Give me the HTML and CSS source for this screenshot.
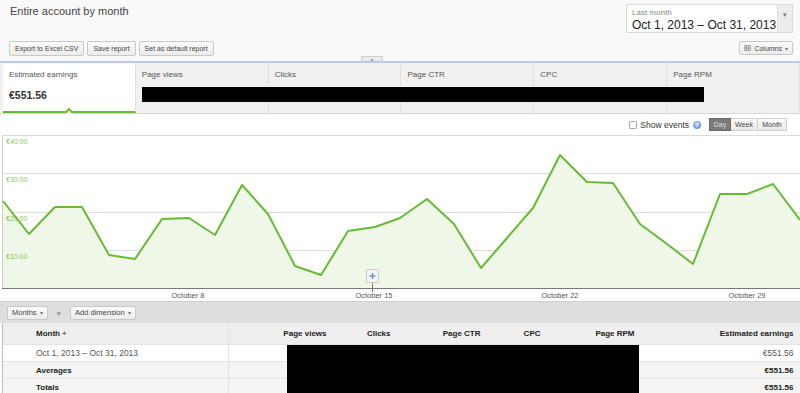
FILE: index.html
```html
<!DOCTYPE html>
<html lang="en">
<head>
  <meta charset="UTF-8">
  <meta name="viewport" content="width=device-width, initial-scale=1.0">
  <title>Entire account by month</title>
  <link rel="stylesheet" href="styles.css">
</head>
<body>
  <div class="page">
    <!-- report header -->
    <div class="report-head">
      <div class="head-left">
        <h1>Entire account by month</h1>
        <div class="btns">
          <button class="btn">Export to Excel CSV</button>
          <button class="btn">Save report</button>
          <button class="btn">Set as default report</button>
        </div>
      </div>
      <div class="head-right">
        <div class="date-picker">
          <div class="date-text">
            <div class="date-label">Last month</div>
            <div class="date-range">Oct 1, 2013 – Oct 31, 2013</div>
          </div>
          <div class="date-arrow">▾</div>
        </div>
        <button class="btn columns-btn">
          <svg width="7" height="6" viewBox="0 0 7 6"><path d="M0.5 0.5h6v5h-6zM0.5 2.2h6M0.5 3.8h6M2.5 0.5v5M4.5 0.5v5" fill="none" stroke="#999" stroke-width="0.8"/></svg>
          Columns <span class="caret">▾</span>
        </button>
      </div>
    </div>

    <div class="collapse-bar"><span class="collapse-tab">▲</span></div>

    <!-- metric tabs -->
    <div class="metrics">
      <div class="metric active">
        <div class="metric-label">Estimated earnings</div>
        <div class="metric-value">€551.56</div>
      </div>
      <div class="metric"><div class="metric-label">Page views</div></div>
      <div class="metric"><div class="metric-label">Clicks</div></div>
      <div class="metric"><div class="metric-label">Page CTR</div></div>
      <div class="metric"><div class="metric-label">CPC</div></div>
      <div class="metric"><div class="metric-label">Page RPM</div></div>
      <div class="redact metric-redact"></div>
    </div>

    <div class="chart-controls">
      <span class="checkbox"></span>
      <span class="events-label">Show events</span>
      <span class="help">?</span>
      <div class="seg">
        <span class="seg-btn on">Day</span>
        <span class="seg-btn">Week</span>
        <span class="seg-btn">Month</span>
      </div>
    </div>

    <!-- chart -->
    <div class="chart">
      <svg width="800" height="166" viewBox="0 0 800 166">
        <g stroke="#dcdcdc" stroke-width="1">
          <line x1="2" y1="0.5" x2="800" y2="0.5"/>
          <line x1="2" y1="38.5" x2="800" y2="38.5"/>
          <line x1="2" y1="77.5" x2="800" y2="77.5"/>
          <line x1="2" y1="115.5" x2="800" y2="115.5"/>
        </g>
        <polygon fill="#eef7e8" points="3,66 29,99 55,72 82,72 109,120 135,124 162,84 189,83 215,100 242,50 268,79 295,131 321,140 348,96 375,92 400,83 427,64 454,89 481,133 507,103 533,73 560,20 587,47 613,48 640,89 667,109 693,129 720,59 747,59 773,49 800,85 800,153 3,153"/>
        <line x1="2.5" y1="0" x2="2.5" y2="153" stroke="#cccccc"/>
        <g class="y-labels">
          <text x="6" y="9">€40.00</text>
          <text x="6" y="47">€30.00</text>
          <text x="6" y="86">€20.00</text>
          <text x="6" y="124">€10.00</text>
        </g>
        <polyline fill="none" stroke="#66bb33" stroke-width="2" stroke-linejoin="round" points="3,66 29,99 55,72 82,72 109,120 135,124 162,84 189,83 215,100 242,50 268,79 295,131 321,140 348,96 375,92 400,83 427,64 454,89 481,133 507,103 533,73 560,20 587,47 613,48 640,89 667,109 693,129 720,59 747,59 773,49 800,85"/>
        <line x1="2" y1="153.5" x2="800" y2="153.5" stroke="#777777"/>
        <line x1="372.5" y1="148" x2="372.5" y2="157" stroke="#777777"/>
        <rect x="366.5" y="134.5" width="12" height="13" rx="1" fill="#f4f4f4" stroke="#cccccc"/>
        <path d="M372.5 138v6M369.5 141h6" stroke="#6b95cf" stroke-width="1.5"/>
        <g class="x-labels">
          <text x="188" y="163">October 8</text>
          <text x="374" y="163">October 15</text>
          <text x="560" y="163">October 22</text>
          <text x="747" y="163">October 29</text>
        </g>
      </svg>
    </div>

    <div class="table-toolbar">
      <button class="btn tb-btn">Months <span class="caret">▾</span></button>
      <span class="chev">»</span>
      <button class="btn tb-btn">Add dimension <span class="caret">▾</span></button>
    </div>

    <!-- table -->
    <div class="table-wrap">
      <table class="report">
        <colgroup>
          <col style="width:226px">
          <col style="width:105px">
          <col style="width:64px">
          <col style="width:90px">
          <col style="width:60px">
          <col style="width:94px">
          <col style="width:159px">
        </colgroup>
        <thead>
          <tr>
            <th class="dim">Month <span class="sort">+</span></th>
            <th>Page views</th>
            <th>Clicks</th>
            <th>Page CTR</th>
            <th>CPC</th>
            <th>Page RPM</th>
            <th>Estimated earnings</th>
          </tr>
        </thead>
        <tbody>
          <tr class="row">
            <td class="dim">Oct 1, 2013 – Oct 31, 2013</td>
            <td></td><td></td><td></td><td></td><td></td>
            <td>€551.56</td>
          </tr>
          <tr class="sum">
            <td class="dim">Averages</td>
            <td></td><td></td><td></td><td></td><td></td>
            <td>€551.56</td>
          </tr>
          <tr class="sum">
            <td class="dim">Totals</td>
            <td></td><td></td><td></td><td></td><td></td>
            <td>€551.56</td>
          </tr>
        </tbody>
      </table>
      <div class="redact table-redact"></div>
    </div>
  </div>
</body>
</html>
```

FILE: styles.css
```css
body {
  margin: 0;
  font-family: "Liberation Sans", Arial, sans-serif;
  color: #333;
  background: #fff;
}
.page {
  width: 800px;
  overflow: hidden;
}
/* header */
.report-head {
  height: 57px;
  background: #f9f9f9;
  display: flex;
  justify-content: space-between;
  padding: 0 7px 0 9px;
  box-sizing: border-box;
}
.report-head h1 {
  margin: 0;
  padding: 5px 0 0 1px;
  font-size: 11px;
  line-height: 12px;
  font-weight: normal;
  color: #444;
}
.btns {
  display: flex;
  gap: 3px;
  margin-top: 24px;
}
.btn {
  font-family: inherit;
  font-size: 7px;
  color: #444;
  height: 15px;
  padding: 0 5px;
  border: 1px solid #c8c8c8;
  border-radius: 2px;
  background: linear-gradient(#fbfbfb, #ececec);
  display: inline-flex;
  align-items: center;
  gap: 3px;
  box-sizing: border-box;
}
.caret {
  font-size: 6px;
  color: #777;
}
.head-right {
  display: flex;
  flex-direction: column;
  align-items: flex-end;
  padding-top: 4px;
}
.date-picker {
  display: flex;
  height: 29px;
  border: 1px solid #dadada;
  background: #fff;
  box-sizing: border-box;
}
.date-text {
  width: 145px;
  padding: 3px 0 0 5px;
}
.date-label {
  font-size: 8px;
  line-height: 9px;
  color: #888;
}
.date-range {
  font-size: 12px;
  line-height: 14px;
  color: #222;
  margin-top: 1px;
}
.date-arrow {
  width: 14px;
  background: #ececec;
  border-left: 1px solid #dcdcdc;
  font-size: 7px;
  color: #777;
  text-align: center;
  padding-top: 6px;
}
.columns-btn {
  margin-top: 8px;
  height: 14px;
  padding: 0 4px;
}
.collapse-bar {
  height: 4px;
  background: #f9f9f9;
  border-bottom: 2px solid #bccbe6;
  position: relative;
}
.collapse-tab {
  position: absolute;
  left: 361px;
  top: -1px;
  width: 20px;
  height: 4px;
  background: #e9e9e9;
  border: 1px solid #cfcfcf;
  border-bottom: none;
  font-size: 4px;
  line-height: 5px;
  color: #777;
  text-align: center;
}
/* metric tabs */
.metrics {
  display: flex;
  height: 50px;
  padding-left: 3px;
  background: #f1f1f1;
  border-bottom: 1px solid #d8d8d8;
  position: relative;
}
.metric {
  flex: 1;
  padding: 7px 6px 0;
  border-right: 1px solid #e0e0e0;
}
.metric:last-of-type {
  border-right: none;
}
.metric.active {
  background: #fff;
  border-bottom: 2px solid #66bb33;
  position: relative;
}
.metric.active::after {
  content: "";
  position: absolute;
  left: 63px;
  bottom: -4px;
  width: 4px;
  height: 4px;
  background: #fff;
  border-left: 2px solid #66bb33;
  border-top: 2px solid #66bb33;
  transform: rotate(45deg);
}
.metric-label {
  font-size: 8px;
  line-height: 10px;
  color: #555;
}
.metric-value {
  margin-top: 9px;
  font-size: 10.5px;
  line-height: 12px;
  font-weight: bold;
  color: #333;
}
.redact {
  position: absolute;
  background: #000;
}
.metric-redact {
  left: 142px;
  top: 24px;
  width: 562px;
  height: 15px;
}
/* chart controls */
.chart-controls {
  height: 21px;
  display: flex;
  justify-content: flex-end;
  align-items: center;
  padding-right: 13px;
}
.checkbox {
  width: 6px;
  height: 6px;
  border: 1px solid #aaa;
  border-radius: 1px;
  background: #fff;
  margin-right: 3px;
}
.events-label {
  font-size: 8.5px;
  color: #333;
}
.help {
  width: 8px;
  height: 8px;
  border-radius: 50%;
  background: radial-gradient(circle at 40% 35%, #a9c8f0, #4f86d6);
  color: #fff;
  font-size: 6px;
  font-weight: bold;
  line-height: 8px;
  text-align: center;
  margin: 0 8px 0 4px;
}
.seg {
  display: flex;
  height: 13px;
}
.seg-btn {
  font-size: 7px;
  line-height: 11px;
  color: #444;
  border: 1px solid #cfcfcf;
  border-left: none;
  background: linear-gradient(#fafafa, #e9e9e9);
  text-align: center;
  box-sizing: border-box;
  width: 27px;
}
.seg-btn:first-child {
  width: 22px;
  border-left: 1px solid #6a6a6a;
}
.seg-btn:last-child {
  width: 29px;
}
.seg-btn.on {
  background: #7a7a7a;
  border-color: #6a6a6a;
  color: #ddd;
}
/* chart */
.chart svg {
  display: block;
}
.y-labels text {
  font-size: 7px;
  fill: #8cc55c;
}
.x-labels text {
  font-size: 7.5px;
  fill: #555;
  text-anchor: middle;
}
/* table toolbar */
.table-toolbar {
  height: 22px;
  background: #dedede;
  border-top: 1px solid #cfcfcf;
  display: flex;
  align-items: center;
  padding-left: 7px;
  box-sizing: border-box;
}
.tb-btn {
  height: 14px;
  font-size: 7.5px;
  padding: 0 4px;
}
.chev {
  font-size: 8px;
  color: #666;
  margin: 2px 9px 0;
}
/* table */
.table-wrap {
  position: relative;
}
.report {
  margin-left: 2px;
  width: 798px;
  border-collapse: collapse;
  table-layout: fixed;
  border-left: 1px solid #bbb;
}
.report th,
.report td {
  padding: 0 7px 0 0;
  text-align: right;
  white-space: nowrap;
  overflow: hidden;
}
.report th {
  height: 21px;
  background: #efefef;
  font-size: 8px;
  font-weight: bold;
  color: #222;
}
.report td {
  height: 16px;
  font-size: 8.5px;
  border-top: 1px solid #e4e4e4;
}
.report .dim {
  text-align: left;
  padding-left: 33px;
  border-right: 1px solid #e2e2e2;
}
.sort {
  font-size: 7px;
  color: #666;
}
.row td {
  background: #fff;
  color: #555;
}
.sum td {
  background: #f4f4f4;
  font-weight: bold;
  font-size: 8px;
  color: #222;
}
.table-redact {
  left: 287px;
  top: 22px;
  width: 352px;
  height: 60px;
}
```
